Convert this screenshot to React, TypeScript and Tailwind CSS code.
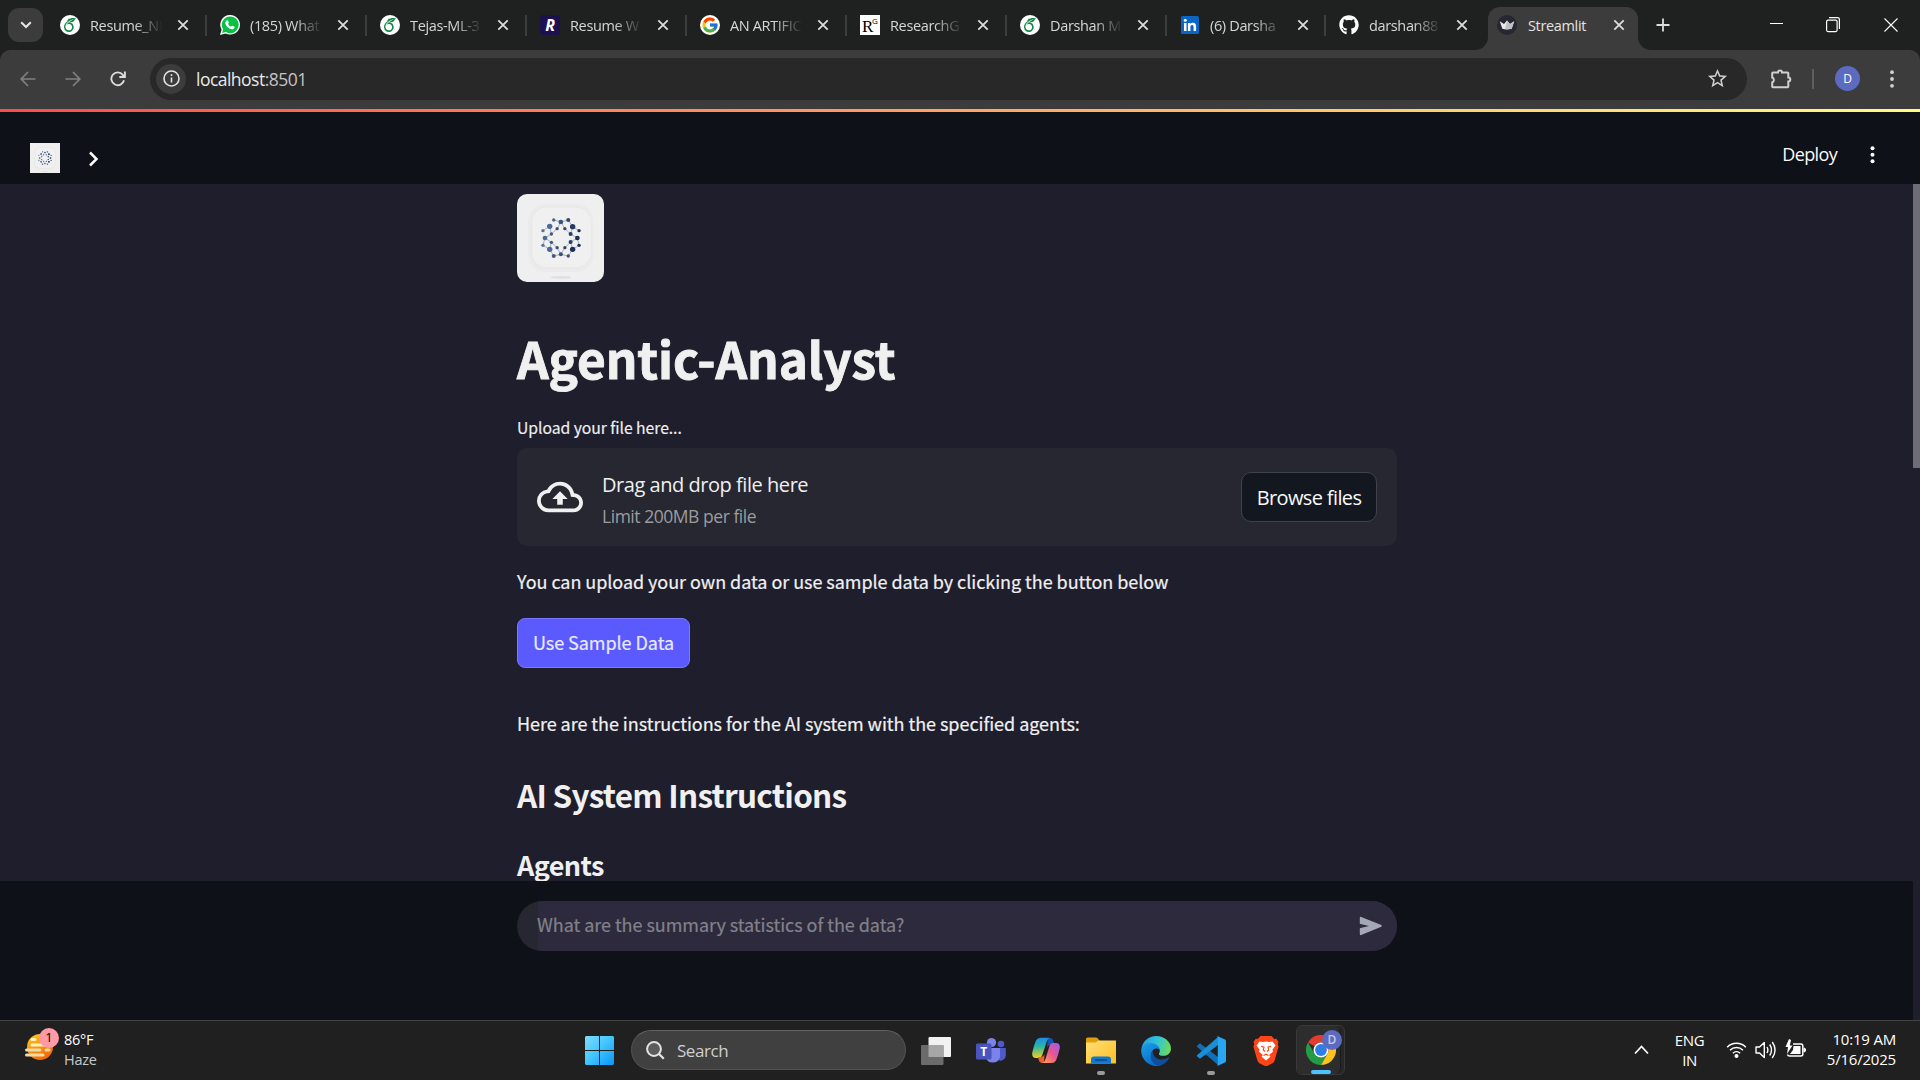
import React from "react";
import { FcGoogle } from "react-icons/fc";
import { FaGithub } from "react-icons/fa";
import { SiOverleaf } from "react-icons/si";
import { MdOutlineCloudUpload, MdStarBorder } from "react-icons/md";

const ui = "font-['Open_Sans','Noto_Sans',sans-serif]";
const source = "font-['Noto_Sans_CJK_SC',sans-serif]";

function CloseIcon() {
  return (
    <svg width="12" height="12" viewBox="0 0 12 12" className="shrink-0 text-[#dcdcdc]">
      <path d="M1.300 1.300l9.400 9.400M10.700 1.300L1.300 10.700" stroke="currentColor" strokeWidth="1.800" fill="none" />
    </svg>
  );
}

function Overleaf() {
  return (
    <div className="flex h-5 w-5 items-center justify-center rounded-full bg-white">
      <SiOverleaf size={14} color="#138a43" />
    </div>
  );
}

function WhatsApp() {
  return (
    <svg width="20" height="20" viewBox="0 0 20 20">
      <path d="M10.200 0a9.800 9.800 0 11-4.700 18.400L0 20l1.600-5.300A9.800 9.800 0 0110.200 0z" fill="#fff" />
      <path d="M10.200 1.400a8.400 8.400 0 11-4.400 15.500l-3.700 1 1-3.600a8.400 8.400 0 017.100-12.900z" fill="#0ac146" />
      <path d="M7 5.300c.4-.2.9 0 1.100.4l.7 1.600c.1.300 0 .6-.8 1.500.6 1.200 1.600 2.200 3.100 2.900.8-1 1-1.200 1.400-1l1.700.8c.4.2.4.4.3.9-.3 1.300-1.600 2-2.800 1.800-3.300-.6-5.900-3-6.400-5.900-.2-1.300.7-2.500 1.700-3z" fill="#fff" />
    </svg>
  );
}

function ResumeR() {
  return (
    <div className="flex h-5 w-5 items-center justify-center rounded bg-[#1c1050] font-['Open_Sans',sans-serif] text-[16px] leading-none font-bold text-white italic">
      R
    </div>
  );
}

function ResearchGate() {
  return (
    <div className="relative h-5 w-5 bg-white font-['Liberation_Serif',serif] text-black">
      <span className="absolute top-[3px] left-[2px] text-[17px] leading-[17px]">R</span>
      <span className="absolute top-0 left-[12px] font-['Open_Sans',sans-serif] text-[8px] leading-[11px]">G</span>
    </div>
  );
}

function LinkedIn() {
  return (
    <svg width="18" height="18" viewBox="0 0 18 18">
      <rect width="18" height="18" rx="1.5" fill="#0a66c2" />
      <path d="M3 7h2.500v8H3zM6.900 7h2.400v1.100C9.700 7.400 10.600 6.800 11.800 6.800c2.500 0 3.300 1.500 3.300 3.900V15h-2.500v-3.900c0-1.300-.3-2.100-1.400-2.100-1.200 0-1.800.8-1.800 2.100V15H6.900z" fill="#fff" />
      <circle cx="4.25" cy="4.2" r="1.5" fill="#fff" />
    </svg>
  );
}

function Crown() {
  return (
    <svg width="20" height="20" viewBox="0 0 20 20">
      <circle cx="10" cy="10" r="10" fill="#262730" />
      <path d="M2.800 6.300l4.200 2.600L10 5.500l3 3.400 4.200-2.600-2.500 7.500q-4.700 1.200-9.400 0z" fill="#e8e8ea" />
      <path d="M10 5.500l3 3.400 4.200-2.600-2.500 7.500q-4 .8-6.500.3z" fill="#bfc0c6" />
    </svg>
  );
}

const tabs: { title: string; icon: React.ReactNode }[] = [
  { title: "Resume_NI", icon: <Overleaf /> },
  { title: "(185) What", icon: <WhatsApp /> },
  { title: "Tejas-ML-3", icon: <Overleaf /> },
  { title: "Resume W", icon: <ResumeR /> },
  { title: "AN ARTIFIC", icon: <FcGoogle size={20} className="rounded-full bg-white p-[1px]" /> },
  { title: "ResearchG", icon: <ResearchGate /> },
  { title: "Darshan M", icon: <Overleaf /> },
  { title: "(6) Darsha", icon: <LinkedIn /> },
  { title: "darshan88", icon: <FaGithub size={20} color="#fff" /> },
];

function TabStrip() {
  return (
    <div className="flex h-[50px] shrink-0 bg-[#1f2120]">
      <div className="mt-2 ml-2 flex h-[34px] w-[35px] items-center justify-center rounded-[11px] bg-[#3c3c3c]">
        <svg width="12" height="8" viewBox="0 0 12 8">
          <path d="M1.200 1.200L6 6l4.800-4.800" stroke="#e6e6e6" strokeWidth="2" fill="none" />
        </svg>
      </div>
      <div className="ml-[4px] flex">
        {tabs.map((tab, i) => (
          <div key={tab.title} className={i > 6 ? "flex w-[159px] items-center" : "flex w-[160px] items-center"}>
            <div className="ml-[13px] flex w-5 shrink-0 justify-center">{tab.icon}</div>
            <div
              className={`ml-[10px] w-[74px] shrink-0 pt-px text-[14.5px] leading-5 tracking-[-0.35px] whitespace-nowrap text-[#d6d6d6] [mask-image:linear-gradient(to_right,black_60%,transparent_98%)] ${ui}`}
            >
              {tab.title}
            </div>
            <div className="ml-[13px] flex flex-1 items-center justify-between">
              <CloseIcon />
              {i < 8 && <div className="h-[21px] w-[2px] bg-[#3c3e3d]" />}
            </div>
          </div>
        ))}
      </div>
      <div className="relative mt-[7px] ml-[3px] flex h-[43px] w-[150px] items-center rounded-t-[12px] bg-[#3c3c3c] pb-[7px]">
        <svg className="absolute bottom-0 -left-[13px]" width="13" height="13" viewBox="0 0 13 13">
          <path d="M13 0v13H0A13 13 0 0013 0z" fill="#3c3c3c" />
        </svg>
        <svg className="absolute -right-[13px] bottom-0" width="13" height="13" viewBox="0 0 13 13">
          <path d="M0 0v13h13A13 13 0 010 0z" fill="#3c3c3c" />
        </svg>
        <div className="ml-[9px]">
          <Crown />
        </div>
        <div className={`ml-[11px] w-[85px] pt-px text-[14.5px] leading-5 tracking-[-0.35px] text-[#e3e3e3] ${ui}`}>Streamlit</div>
        <CloseIcon />
      </div>
      <svg className="mt-[18px] ml-[18px]" width="14" height="14" viewBox="0 0 14 14">
        <path d="M7 .5v13M.5 7h13" stroke="#dcdcdc" strokeWidth="1.800" />
      </svg>
      <div className="mr-[22px] ml-auto flex items-center gap-[43px] pb-[1px]">
        <svg width="13" height="13" viewBox="0 0 13 13">
          <path d="M0 5.500h13" stroke="#fff" />
        </svg>
        <svg width="15" height="16" viewBox="0 0 15 16">
          <rect x=".6" y="3.100" width="10.500" height="11.500" rx="1.500" stroke="#fff" strokeWidth="1.200" fill="none" />
          <path d="M3 .700h8.500Q13.400.700 13.400 2.700V12" stroke="#fff" strokeWidth="1.200" fill="none" />
        </svg>
        <svg width="14" height="14" viewBox="0 0 14 14">
          <path d="M.5.500l13 13M13.500.500l-13 13" stroke="#fff" strokeWidth="1.100" />
        </svg>
      </div>
    </div>
  );
}

function AddressBar() {
  return (
    <div className="h-[59px] shrink-0 bg-[#1f2120]">
      <div className="flex h-full items-center rounded-t-[10px] bg-[#3c3c3c] pb-[2px]">
        <svg className="ml-5" width="16" height="16" viewBox="0 0 16 16">
          <path d="M15.500 8H1.500M8 1L1.200 8 8 15" stroke="#808080" strokeWidth="1.700" fill="none" />
        </svg>
        <svg className="ml-[29px]" width="16" height="16" viewBox="0 0 16 16">
          <path d="M.5 8h14M8 1l6.800 7L8 15" stroke="#808080" strokeWidth="1.700" fill="none" />
        </svg>
        <svg className="ml-[29px]" width="16" height="16" viewBox="0 0 16 16">
          <path d="M14 9.200A6.400 6.400 0 1112.800 3.800L14.500 5.600M14.900.500v5.500H9.300" stroke="#dedede" strokeWidth="1.900" fill="none" />
        </svg>
        <div className="ml-[24px] flex h-[42px] w-[1597px] items-center rounded-full bg-[#282828]">
          <div className="ml-[6px] flex h-[30px] w-[30px] items-center justify-center rounded-full bg-[#3c3c3c]">
            <svg width="17" height="17" viewBox="0 0 17 17">
              <circle cx="8.500" cy="8.500" r="7.500" stroke="#e3e3e3" strokeWidth="1.600" fill="none" />
              <path d="M8.500 7.500v5M8.500 4.300v1.800" stroke="#e3e3e3" strokeWidth="1.600" />
            </svg>
          </div>
          <div className={`ml-[10px] pt-px text-[17.500px] leading-6 tracking-[-0.520px] text-[#e8e8e8] ${ui}`}>
            localhost<span className="text-[#c4c4c4]">:8501</span>
          </div>
          <MdStarBorder size={23} className="mr-[18px] ml-auto text-[#d0d0d0]" />
        </div>
        <svg className="ml-[23px]" width="22" height="22" viewBox="0 0 22 22">
          <path
            d="M3.500 4.500H8A2 2 0 0112 4.500h5.500q.8 0 .8.800V9.500a2 2 0 010 4V18.500q0 .8-.8.800H3q-.8 0-.8-.8V14.500a2.700 2.700 0 000-5V5.300q0-.8.8-.8z"
            stroke="#d0d0d0"
            strokeWidth="2"
            fill="none"
          />
        </svg>
        <div className="ml-[20px] h-5 w-[2px] bg-[#5e5e5e]" />
        <div className={`ml-[21px] flex h-[25px] w-[25px] items-center justify-center rounded-full bg-[#5c6bc0] text-[12px] text-white ${ui}`}>D</div>
        <svg className="ml-[30px]" width="4" height="18" viewBox="0 0 4 18">
          <circle cx="2" cy="2.200" r="1.900" fill="#d0d0d0" />
          <circle cx="2" cy="9" r="1.900" fill="#d0d0d0" />
          <circle cx="2" cy="15.800" r="1.900" fill="#d0d0d0" />
        </svg>
      </div>
    </div>
  );
}

const nodes: [number, number, number, string][] = [
  [160, 120, 5, "#4a658c"], [203, 120, 6, "#34486b"], [181, 126, 7, "#3b5580"],
  [148, 139, 8, "#4b6a96"], [216, 140, 8, "#253a68"], [170, 146, 5, "#3b5075"],
  [193, 146, 5, "#33466b"], [128, 152, 5, "#56759e"], [235, 152, 5, "#22314f"],
  [153, 162, 5, "#405a85"], [210, 162, 6, "#2a3c63"], [134, 174, 7, "#4b6a96"],
  [230, 174, 7, "#22314f"], [153, 187, 5, "#405a85"], [210, 186, 6, "#2a3c63"],
  [128, 196, 5, "#56759e"], [235, 196, 5, "#22314f"], [148, 208, 8, "#4b6a96"],
  [216, 208, 8, "#1f3058"], [170, 203, 5, "#3b5075"], [193, 203, 5, "#33466b"],
  [181, 223, 6, "#3b4f73"], [160, 228, 6, "#4a5a7c"], [203, 228, 5, "#40506f"],
];

function Logo({ size }: { size: number }) {
  return (
    <svg width={size} height={size} viewBox="51 42 261 264" preserveAspectRatio="none">
      <rect x="51" y="42" width="261" height="264" fill="#efefef" />
      <rect x="84" y="72" width="194" height="204" rx="52" fill="#ebebeb" />
      <rect x="92" y="80" width="180" height="186" rx="46" fill="#e8e8e9" />
      <rect x="96" y="83" width="174" height="179" rx="44" fill="#f0f0f1" />
      <path
        d="M128 152l20-13M148 139l5 23M160 120l21 6 22-6 13 20M181 126l-11 20-17 16-19 12M181 126l12 20 17 16 20 12M216 140l-6 22M216 140l19 12M230 174l5 22-19 12-6-22 20-12M134 174l-6 22M134 174l19 13 17 16 11 20M210 186l-17 17-12 20M148 208l5-21M148 208l-20-12M148 208l12 20 21-5 22 5 13-20"
        stroke="#8fa2c0"
        strokeWidth="2.500"
        fill="none"
      />
      {nodes.map(([x, y, r, c]) => (
        <circle key={`${x}-${y}`} cx={x} cy={y} r={r} fill={c} />
      ))}
      <ellipse cx="181" cy="292" rx="32" ry="3.500" fill="#dedede" />
    </svg>
  );
}

function Page() {
  return (
    <div className="flex h-[911px] shrink-0 flex-col">
      <div className="h-[3px] shrink-0 bg-[linear-gradient(to_right,#ff4b4b,#fffd80)]" />
      <div className="flex h-[72px] shrink-0 items-center bg-[#0e1117] text-[#fafafa]">
        <div className="mt-[20px] ml-[30px] flex h-[30px]">
          <Logo size={30} />
        </div>
        <svg className="mt-[22px] ml-[28px]" width="11" height="16" viewBox="0 0 11 16">
          <path d="M2 1.500L8.500 8 2 14.500" stroke="#fafafa" strokeWidth="2.500" fill="none" />
        </svg>
        <div className={`mt-[12px] mr-[33px] ml-auto text-[18px] leading-6 tracking-[-0.650px] ${ui}`}>Deploy</div>
        <svg className="mt-[14px] mr-[45px]" width="5" height="18" viewBox="0 0 5 18">
          <circle cx="2.500" cy="2.200" r="2" fill="#fafafa" />
          <circle cx="2.500" cy="8.700" r="2" fill="#fafafa" />
          <circle cx="2.500" cy="15.200" r="2" fill="#fafafa" />
        </svg>
      </div>
      <div className="flex h-[697px] shrink-0 justify-between overflow-hidden bg-[#1f1e2d]">
        <main className={`ml-[517px] w-[880px] text-[18px] tracking-[-0.050px] text-[#f0f0f0] ${source}`}>
          <div className="mt-[10px] h-[88px] w-[87px] overflow-hidden rounded-[10px]">
            <Logo size={88} />
          </div>
          <h1 className="mt-[43px] text-[49.500px] leading-[66px] font-bold tracking-[-0.120px] [-webkit-text-stroke:0.900px_#f0f0f0]">Agentic-Analyst</h1>
          <div className="mt-[25px] text-[15.750px] leading-6 tracking-[-0.060px] [-webkit-text-stroke:0.150px_#f0f0f0]">Upload your file here...</div>
          <div className={`mt-[8px] flex h-[98px] items-center rounded-[10px] bg-[#262730] px-5 ${ui}`}>
            <MdOutlineCloudUpload size={46} className="text-[#f0f0f0]" />
            <div className="mt-[6px] ml-[19px]">
              <div className="text-[20px] leading-8 tracking-[-0.460px]">Drag and drop file here</div>
              <div className="text-[17.500px] leading-[30px] tracking-[-0.460px] text-[#9c9c9f]">Limit 200MB per file</div>
            </div>
            <button className="ml-auto h-[50px] w-[136px] rounded-[10px] border border-[#41434c] bg-[#131720] pt-[2px] text-[20px] tracking-[-0.620px] whitespace-nowrap text-[#fafafa]">
              Browse files
            </button>
          </div>
          <p className="mt-[20px] leading-[30px] [-webkit-text-stroke:0.200px_#f0f0f0]">You can upload your own data or use sample data by clicking the button below</p>
          <button className="mt-[22px] block h-[50px] w-[173px] rounded-[8px] border border-[#7a79fb] bg-[#5a5aff] pb-[2px] leading-6 text-[#e9e9fb] [-webkit-text-stroke:0.200px_#e9e9fb]">
            Use Sample Data
          </button>
          <p className="mt-[40px] leading-[30px] [-webkit-text-stroke:0.200px_#f0f0f0]">Here are the instructions for the AI system with the specified agents:</p>
          <h2 className="mt-[35px] text-[31.500px] leading-[42px] font-bold tracking-[-0.750px]">AI System Instructions</h2>
          <h3 className="mt-[32px] text-[27px] leading-[36px] font-bold tracking-[-0.600px]">Agents</h3>
        </main>
        <div className="h-[284px] w-[7px] bg-[#6d6c77]" />
      </div>
      <div className="h-[139px] shrink-0 bg-[#1f1e2d] pr-[7px]">
        <div className="h-full bg-[#0e1117] pt-5 pl-[517px]">
          <div className="flex h-[50px] w-[880px] overflow-hidden rounded-full bg-[#262730]">
            <div className={`ml-[21px] flex flex-1 items-center bg-[#2c2a3c] text-[18px] tracking-[-0.050px] text-[#82818b] ${source}`}>
              <span className="-ml-px pb-[3px] [-webkit-text-stroke:0.200px_#82818b]">What are the summary statistics of the data?</span>
              <svg className="mr-[14px] ml-auto" width="24" height="20" viewBox="0 0 24 20">
                <path d="M.8 1.800Q.8.300 2.200.900L22.300 9q1.400.800 0 1.700L2.200 19Q.8 19.500.8 18v-5.200q0-.6.700-.8L10 10 1.500 8q-.7-.2-.7-.8z" fill="#a4a7b6" />
              </svg>
            </div>
          </div>
        </div>
      </div>
    </div>
  );
}

function Haze() {
  return (
    <svg width="30" height="28" viewBox="0 0 30 28">
      <defs>
        <linearGradient id="sun" x1="0" y1="0" x2=".5" y2="1">
          <stop offset="0" stopColor="#ffcb1f" />
          <stop offset="1" stopColor="#f06a0b" />
        </linearGradient>
      </defs>
      <circle cx="15" cy="14" r="13" fill="url(#sun)" />
      <g strokeWidth="3" strokeLinecap="round">
        <path d="M7 6.500h3M7 12h20" stroke="#fff0b8" />
        <path d="M1.500 17H15M21 17h3M1.500 22H18" stroke="#f3dca0" />
      </g>
    </svg>
  );
}

function Teams() {
  return (
    <svg width="30" height="28" viewBox="0 0 30 28">
      <circle cx="25" cy="7" r="3.300" fill="#5059c9" />
      <path d="M19 11h10q.8 0 .8.800v6.500a5.500 5.500 0 01-10 3z" fill="#5059c9" />
      <circle cx="15.500" cy="5.500" r="4.600" fill="#7b83eb" />
      <path d="M9.500 11H23q1 0 1 1v8a7.500 7.500 0 01-14.500 0z" fill="#7b83eb" />
      <rect y="6.500" width="15.500" height="16" rx="1.500" fill="#4b53bc" />
      <text x="7.700" y="19" textAnchor="middle" fontFamily="Open Sans" fontSize="12" fontWeight="700" fill="#fff">T</text>
    </svg>
  );
}

function Copilot() {
  return (
    <svg width="28" height="27" viewBox="0 0 28 27">
      <defs>
        <linearGradient id="cpA" x1="0" y1="0" x2="0" y2="1">
          <stop offset="0" stopColor="#1a8ce8" />
          <stop offset=".45" stopColor="#2fb6a0" />
          <stop offset="1" stopColor="#f5d21b" />
        </linearGradient>
        <linearGradient id="cpB" x1="1" y1="0" x2="0" y2="1">
          <stop offset="0" stopColor="#9b5cf0" />
          <stop offset=".5" stopColor="#ea5690" />
          <stop offset="1" stopColor="#ffa44d" />
        </linearGradient>
      </defs>
      <path d="M16 1h2.500Q20.500 1 21.300 4l1.200 4H18q-2 0-3 3z" fill="#1552b8" />
      <path d="M8.500.800h9Q15.500 2 14.600 5l-4.300 13q-1 3-3.600 3H4Q-.5 21 .3 15.500 2 8 4 3.500 5.300.800 8.500.800z" fill="url(#cpA)" />
      <path d="M12 26H9.500q-2 0-2.800-3L6 20h3.500q2 0 3-3z" fill="#f05a35" />
      <path d="M19.500 26h-9q2-1 3-4l4-13q1-3 3.600-3H24q4.500 0 3.700 5.500-1.700 7.500-3.700 12-1.300 2.500-4.500 2.500z" fill="url(#cpB)" />
    </svg>
  );
}

function Folder() {
  return (
    <svg width="30" height="28" viewBox="0 0 30 28">
      <defs>
        <linearGradient id="fold" x1="0" y1="0" x2="1" y2="1">
          <stop offset="0" stopColor="#ffdf78" />
          <stop offset="1" stopColor="#fdbf22" />
        </linearGradient>
      </defs>
      <path d="M0 2Q0 .5 1.500.500H10q1 0 1.800 1l2 2.500v5H0z" fill="#df9e0b" />
      <path d="M0 5.500h9.500l3-2H30V26.500H0z" fill="url(#fold)" />
      <path d="M5 26.500V22.500Q5 19.500 8 19.500h14q3 0 3 3v4z" fill="#0f78cf" />
      <path d="M9 23h12" stroke="#083f83" strokeWidth="1.500" />
    </svg>
  );
}

function Edge() {
  return (
    <svg width="30" height="30" viewBox="0 0 30 30">
      <defs>
        <linearGradient id="edA" x1="0" y1=".3" x2="1" y2=".5">
          <stop offset="0" stopColor="#219fdc" />
          <stop offset=".5" stopColor="#2fc3df" />
          <stop offset="1" stopColor="#6cdc55" />
        </linearGradient>
        <linearGradient id="edB" x1="0" y1="0" x2=".5" y2="1">
          <stop offset="0" stopColor="#1ba0e8" />
          <stop offset="1" stopColor="#0a6cc8" />
        </linearGradient>
      </defs>
      <path d="M.3 13C1.500 5 8 0 15 0c8.500 0 15 6 15 12.500 0 4.500-3.300 7.300-7.300 7.300-3.500 0-5.200-1.200-4.700-2.400 1.500-2 1-5-1.500-6.500C12 7.500 3 8 .3 13z" fill="url(#edA)" />
      <path d="M.2 14C1 9.500 5 7 9.500 7c5 0 9 3 9.200 6.500-4-3-8.700.5-8.500 5.500.2 5 4.300 9.500 9.500 10.200A15 15 0 01.2 14z" fill="url(#edB)" />
      <path d="M12.200 14.500C11 18 14 23.500 20 23.500c3 0 5.500-1 7-2 .8-.5 1.300.2.900.9C25.500 26.500 21.500 29.500 17 29.700 9.500 28 7.500 18 12.200 14.500z" fill="#0c4f9e" />
    </svg>
  );
}

function VSCode() {
  return (
    <svg width="30" height="30" viewBox="0 0 30 30">
      <path d="M1.300 9.500l2-1.700q.6-.5 1.300 0L22 21v8L1.300 11q-.9-.8 0-1.500z" fill="#0e70b8" />
      <path d="M1.300 20.500l2 1.700q.6.500 1.300 0L22 9V1L1.300 19q-.9.800 0 1.500z" fill="#1a8fd8" />
      <path d="M22.300.500L29 3.600q1 .5 1 1.600v19.600q0 1.100-1 1.600l-6.700 3.100q-1 .3-1.800-.5.900.6 1.300-.6V1.600Q21.400.400 20.500 1q.8-.8 1.800-.5z" fill="#2aa5f2" />
    </svg>
  );
}

function Brave() {
  return (
    <svg width="26" height="30" viewBox="0 0 26 30">
      <path d="M7.500 0h11l2.800 3 2-.3L25.500 6l-.8 2 .9 2.500-4 14q-.6 1.800-2 2.800L13 30.500l-6.600-3.200q-1.400-1-2-2.800L.4 10.500 1.300 8 .5 6l2.200-3.300 2 .3z" fill="#ff4518" />
      <path d="M6.500 5.500l3.500.6 3-.6 3 .6 3.500-.6 3 4-3 4 .5 2.200-4 3.300 1.500 1.500L13 24.500 8.500 20.500 10 19l-4-3.300.5-2.200-3-4z" fill="#fff" />
      <path d="M8 10.300l3 .9-.7 2.800 1.700 1.500M18 10.300l-3 .9.7 2.800-1.700 1.500M10.500 19.500l2.500-1.300 2.500 1.300" stroke="#ff4518" strokeWidth="1.100" fill="none" />
    </svg>
  );
}

function Chrome() {
  return (
    <svg width="30" height="30" viewBox="0 0 30 30">
      <path d="M2 7.500A15 15 0 0128 7.500H15a7.500 7.500 0 00-6.500 3.750z" fill="#e33b2e" />
      <path d="M2 7.500A15 15 0 0015 30l6.500-11.250A7.500 7.500 0 018.500 18.750z" fill="#249c46" />
      <path d="M28 7.500A15 15 0 0115 30l6.500-11.250A7.500 7.500 0 0015 7.500z" fill="#fcc31e" />
      <circle cx="15" cy="15" r="7.500" fill="#fff" />
      <circle cx="15" cy="15" r="5.900" fill="#2f7de9" />
    </svg>
  );
}

function TaskView() {
  return (
    <svg width="30" height="28" viewBox="0 0 30 28">
      <rect x="7.500" y="0" width="22.500" height="20" rx="1" fill="#f2f2f2" />
      <rect x="0" y="8" width="22.500" height="20" rx="1" fill="#6b6b6b" />
      <rect x="7.500" y="8" width="15" height="12" fill="#a6a6a6" />
    </svg>
  );
}

const apps: { name: string; icon: React.ReactNode; open?: boolean }[] = [
  { name: "view", icon: <TaskView /> },
  { name: "teams", icon: <Teams /> },
  { name: "copilot", icon: <Copilot /> },
  { name: "folder", icon: <Folder />, open: true },
  { name: "edge", icon: <Edge /> },
  { name: "code", icon: <VSCode />, open: true },
  { name: "brave", icon: <Brave /> },
];

function Taskbar() {
  return (
    <div className={`flex h-[60px] shrink-0 border-t border-[#444444] bg-[#202020] text-white ${ui}`}>
      <div className="relative mt-[12px] ml-[25px] h-[30px] w-[30px]">
        <Haze />
        <div className="absolute -top-[5px] left-[14px] flex h-5 w-5 items-center justify-center rounded-full bg-[#ff99a4] text-[13px] text-black">1</div>
      </div>
      <div className="mt-[9px] ml-[9px] w-[521px] text-[14.500px] leading-5 tracking-[-0.300px]">
        <div>86°F</div>
        <div className="text-[#c8c8c8]">Haze</div>
      </div>
      <svg className="mt-[15px] shrink-0" width="29" height="29" viewBox="0 0 29 29">
        <defs>
          <linearGradient id="win" x1="0" y1="0" x2="1" y2="1">
            <stop offset="0" stopColor="#80dcff" />
            <stop offset=".5" stopColor="#40c4fc" />
            <stop offset="1" stopColor="#0a94fa" />
          </linearGradient>
        </defs>
        <path d="M1 0h13v14H0V1zM15 0h13l1 1v13H15zM0 15h14v14H1l-1-1zM15 15h14v13l-1 1H15z" fill="url(#win)" />
      </svg>
      <div className="mt-[9px] ml-[17px] flex h-[40px] w-[275px] shrink-0 items-center rounded-full border border-[#515151] border-t-[#626262] bg-[#404040]">
        <svg className="ml-[14px]" width="19" height="19" viewBox="0 0 19 19">
          <circle cx="8" cy="8" r="6.900" stroke="#e4e4e4" strokeWidth="2" fill="#5c5c5c" />
          <path d="M13 13l4.800 4.800" stroke="#e4e4e4" strokeWidth="2.200" />
        </svg>
        <div className="ml-[12px] pt-px text-[17px] tracking-[-0.450px] text-[#cfcfcf]">Search</div>
      </div>
      <div className="ml-[2px] flex">
        {apps.map((app) => (
          <div key={app.name} className="relative flex h-[59px] w-[55px] items-center justify-center">
            {app.icon}
            {app.open && <div className="absolute bottom-[5px] left-[24px] h-1 w-2 rounded-full bg-[#9a9a9a]" />}
          </div>
        ))}
      </div>
      <div className="mt-[4px] ml-[3px] h-[50px] w-[49px] rounded-[6px] border border-[#393939] bg-[#272727]">
        <div className="relative flex h-full w-[44px] items-center justify-center rounded-[6px] border-r border-[#1b1b1b] bg-[#2d2d2d] pl-[5px]">
          <Chrome />
          <div className="absolute top-[4px] left-[25px] flex h-5 w-5 items-center justify-center rounded-full bg-[#5c6bc0] text-[12px] font-semibold text-[#c5cbea]">D</div>
          <div className="absolute bottom-0 left-[14px] h-1 w-5 rounded-full bg-[#4cc2ff]" />
        </div>
      </div>
      <svg className="mt-[24px] ml-auto" width="15" height="10" viewBox="0 0 15 10">
        <path d="M1 8.500l6.500-7 6.500 7" stroke="#fff" strokeWidth="1.700" fill="none" />
      </svg>
      <div className="mt-[9px] ml-[22px] w-[37px] text-center text-[15px] leading-5 tracking-[-0.400px]">
        ENG
        <br />
        IN
      </div>
      <svg className="mt-[18px] ml-[18px]" width="21" height="21" viewBox="0 0 21 21">
        <path d="M1.200 8.200a13 13 0 0118.600 0M4 11.300a9.200 9.200 0 0113 0M6.900 14.300a5.200 5.200 0 017.200 0" stroke="#fff" strokeWidth="1.500" fill="none" />
        <circle cx="10.500" cy="17" r="2" fill="#fff" />
      </svg>
      <svg className="mt-[19px] ml-[8px]" width="22" height="20" viewBox="0 0 22 20">
        <path d="M1 7h3.500L9.300 2.500v15L4.500 13H1z" stroke="#fff" strokeWidth="1.400" fill="none" strokeLinejoin="round" />
        <path d="M12 7q1.800 3 0 6M14.700 4.500q3.600 5.500 0 11M17.300 2q5.500 8 0 16" stroke="#fff" strokeWidth="1.400" fill="none" />
      </svg>
      <svg className="mt-[18px] ml-[8px]" width="21" height="20" viewBox="0 0 21 20">
        <path d="M8 5h8q1.800 0 1.800 1.800v8.500q0 1.700-1.800 1.700H4.500q-1.500 0-2-1.500" stroke="#fff" strokeWidth="1.500" fill="none" />
        <path d="M8.500 7H15.500v8H5L8 11z" fill="#fff" />
        <path d="M19 9q1.500 0 1.500 2T19 13z" fill="#fff" stroke="#fff" />
        <path d="M4 0L.5 8H3L2 15 7.500 6.500H4.800L6 1z" fill="#fff" />
      </svg>
      <div className="mt-[8px] mr-[24px] w-[90px] text-right text-[15px] leading-5 tracking-[-0.200px]">
        10:19 AM
        <br />
        5/16/2025
      </div>
    </div>
  );
}

export default function App() {
  return (
    <div className="flex h-[1080px] w-[1920px] flex-col overflow-hidden">
      <TabStrip />
      <AddressBar />
      <Page />
      <Taskbar />
    </div>
  );
}
